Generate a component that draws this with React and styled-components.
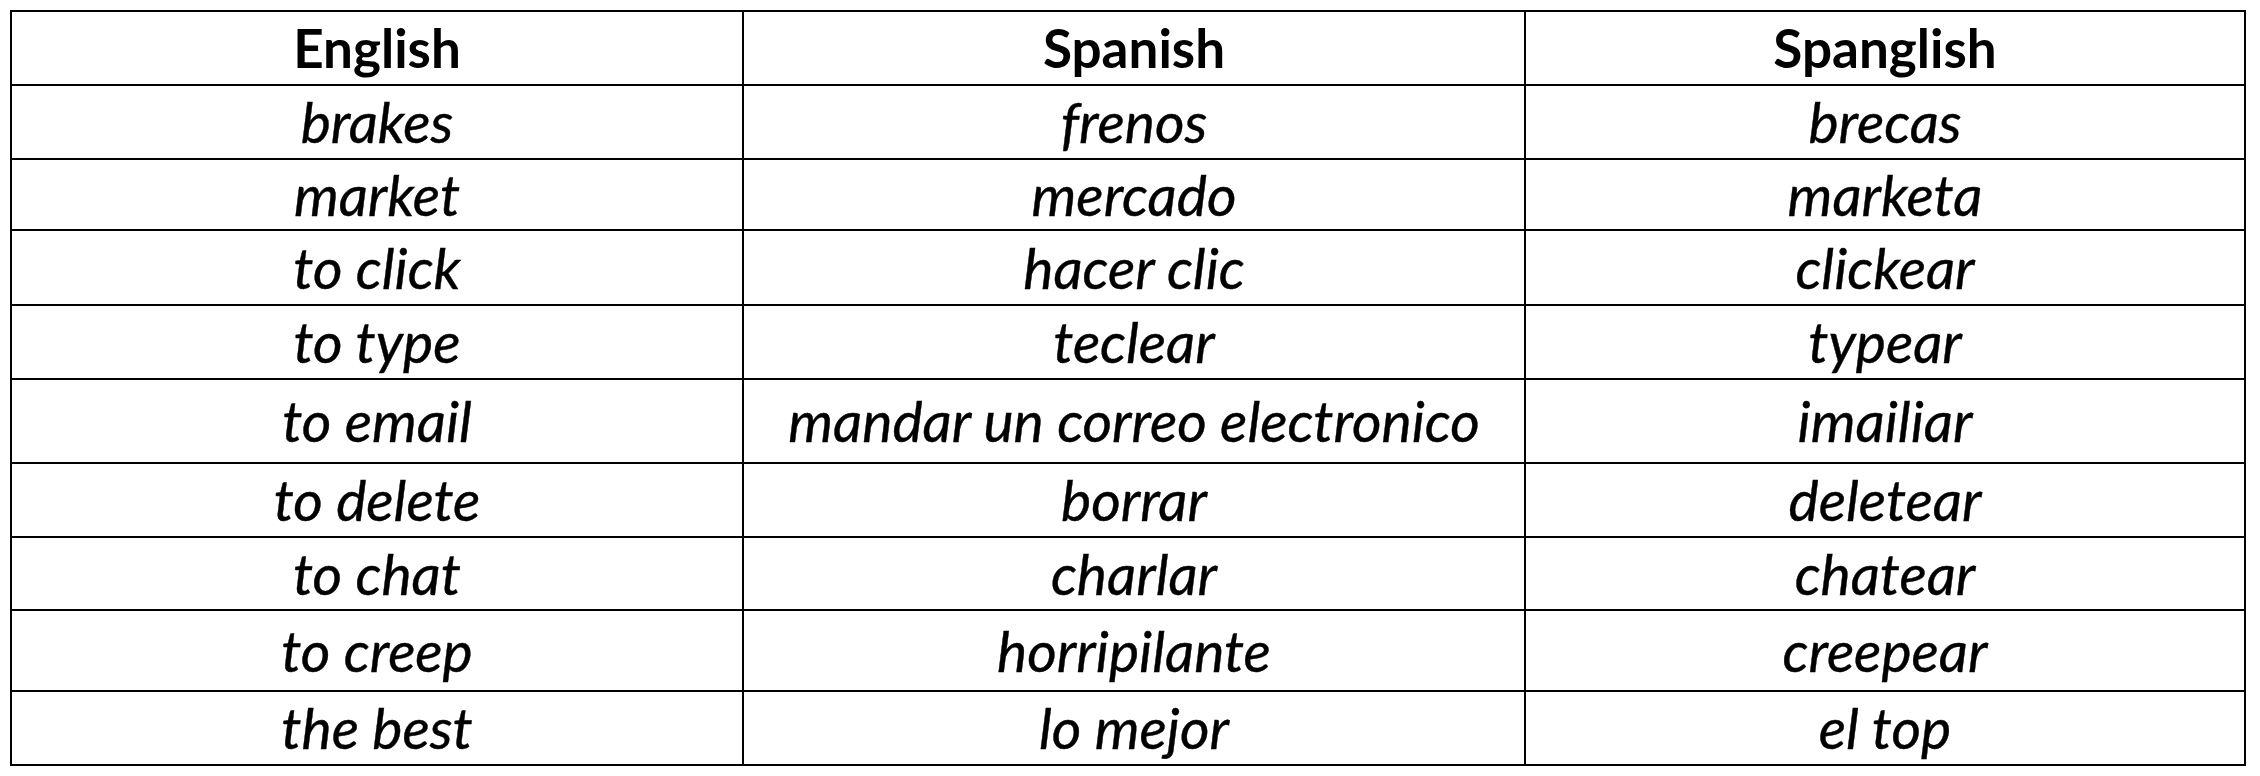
import styled, { createGlobalStyle } from 'styled-components';

const GlobalStyle = createGlobalStyle`
  html, body {
    margin: 0;
    padding: 0;
    background: #fff;
  }
  body {
    font-family: Lato, "Open Sans", sans-serif;
    color: #000;
  }
`;

const COLUMNS = ['English', 'Spanish', 'Spanglish'];

const ROWS = [
  { height: 74, words: ['brakes', 'frenos', 'brecas'] },
  { height: 71, words: ['market', 'mercado', 'marketa'] },
  { height: 75, words: ['to click', 'hacer clic', 'clickear'] },
  { height: 74, words: ['to type', 'teclear', 'typear'] },
  { height: 84, words: ['to email', 'mandar un correo electronico', 'imailiar'] },
  { height: 74, words: ['to delete', 'borrar', 'deletear'] },
  { height: 73, words: ['to chat', 'charlar', 'chatear'] },
  { height: 81, words: ['to creep', 'horripilante', 'creepear'] },
  { height: 74, words: ['the best', 'lo mejor', 'el top'] },
];

function App() {
  return (
    <>
      <GlobalStyle />
      <Page>
        <Table>
          {COLUMNS.map((col) => (
            <HeadCell key={col} $height={74}>{col}</HeadCell>
          ))}
          {ROWS.map((row) =>
            row.words.map((word, i) => (
              <Cell key={row.words[0] + i} $height={row.height}>{word}</Cell>
            ))
          )}
        </Table>
      </Page>
    </>
  );
}

export default App;

const Page = styled.div`
  padding: 10px 0 0 10px;
  width: 2260px;
  height: 776px;
  box-sizing: border-box;
  overflow: hidden;
`;

const Table = styled.div`
  display: grid;
  grid-template-columns: 732px 782px 720px;
  width: max-content;
  border-top: 2px solid #000;
  border-left: 2px solid #000;
`;

const Cell = styled.div`
  box-sizing: border-box;
  height: ${(p) => p.$height}px;
  display: flex;
  align-items: center;
  justify-content: center;
  border-right: 2px solid #000;
  border-bottom: 2px solid #000;
  font-size: 57px;
  font-style: italic;
  white-space: nowrap;
  padding-bottom: 2px;
  -webkit-text-stroke: 0.4px #000;
`;

const HeadCell = styled(Cell)`
  font-size: 53px;
  font-style: normal;
  font-weight: 700;
  -webkit-text-stroke: 0;
`;
